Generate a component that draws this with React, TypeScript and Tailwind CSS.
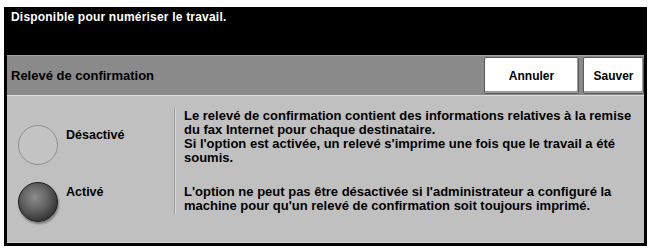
const font = { fontFamily: '"Liberation Sans", Arial, sans-serif' };

const Bouton = ({ label, width }: { label: string; width: string }) => (
  <button
    className={`${width} h-[37px] bg-white rounded-[2px] border border-[#5a5a5a] shadow-[inset_-1px_-2px_0_#9a9a9a,inset_1px_1px_0_#ffffff] text-[12px] font-bold text-black`}
  >
    {label}
  </button>
);

const App = () => {
  return (
    <div className="w-[650px] h-[248px] bg-white pt-[7px] pl-[4px] pr-[3px] pb-[2px]" style={font}>
      <div className="h-full border-[3px] border-black bg-black flex flex-col">
        <div className="h-[45px] shrink-0 px-[4px] text-white text-[12px] font-bold leading-[14px] tracking-[0.2px]">
          Disponible pour numériser le travail.
        </div>

        <div className="h-[40px] shrink-0 bg-[#8a8a8a] border-t border-[#a4a4a4] flex items-center justify-between pl-[4px]">
          <span className="text-[13px] font-bold text-black">Relevé de confirmation</span>
          <div className="flex gap-[4px] items-center">
            <Bouton label="Annuler" width="w-[95px]" />
            <Bouton label="Sauver" width="w-[61px]" />
          </div>
        </div>

        <div className="flex-1 bg-[#c0c0c0] border-t border-[#dcdcdc] border-b border-b-[#d2d2d2] flex">
          <div className="w-[167px] shrink-0 flex flex-col pl-[11px] pt-[29px] gap-[17px]">
            <div className="flex items-start gap-[8px]">
              <div className="w-[40px] h-[40px] rounded-full border border-[#8e8e8e] bg-[#c4c4c4]" />
              <span className="text-[12.5px] font-bold text-black mt-[1px]">Désactivé</span>
            </div>
            <div className="flex items-start gap-[8px]">
              <div className="w-[40px] h-[40px] rounded-full border border-[#1a1a1a] bg-[radial-gradient(circle_at_42%_38%,#8c8c8c_0%,#626262_40%,#333333_75%,#151515_100%)] shadow-[1px_2px_2px_rgba(0,0,0,0.35)]" />
              <span className="text-[12.5px] font-bold text-black mt-[1px]">Activé</span>
            </div>
          </div>
          <div className="w-[1px] bg-[#9c9c9c] mt-[12px] mb-[28px] shadow-[1px_0_0_#d8d8d8]" />
          <div className="flex-1 pl-[9px] pt-[13px] text-[13px] font-bold text-black leading-[14px] whitespace-nowrap">
            <p>
              Le relevé de confirmation contient des informations relatives à la remise
              <br />
              du fax Internet pour chaque destinataire.
              <br />
              Si l'option est activée, un relevé s'imprime une fois que le travail a été
              <br />
              soumis.
            </p>
            <p className="mt-[20px]">
              L'option ne peut pas être désactivée si l'administrateur a configuré la
              <br />
              machine pour qu'un relevé de confirmation soit toujours imprimé.
            </p>
          </div>
        </div>
      </div>
    </div>
  );
};

export default App;
